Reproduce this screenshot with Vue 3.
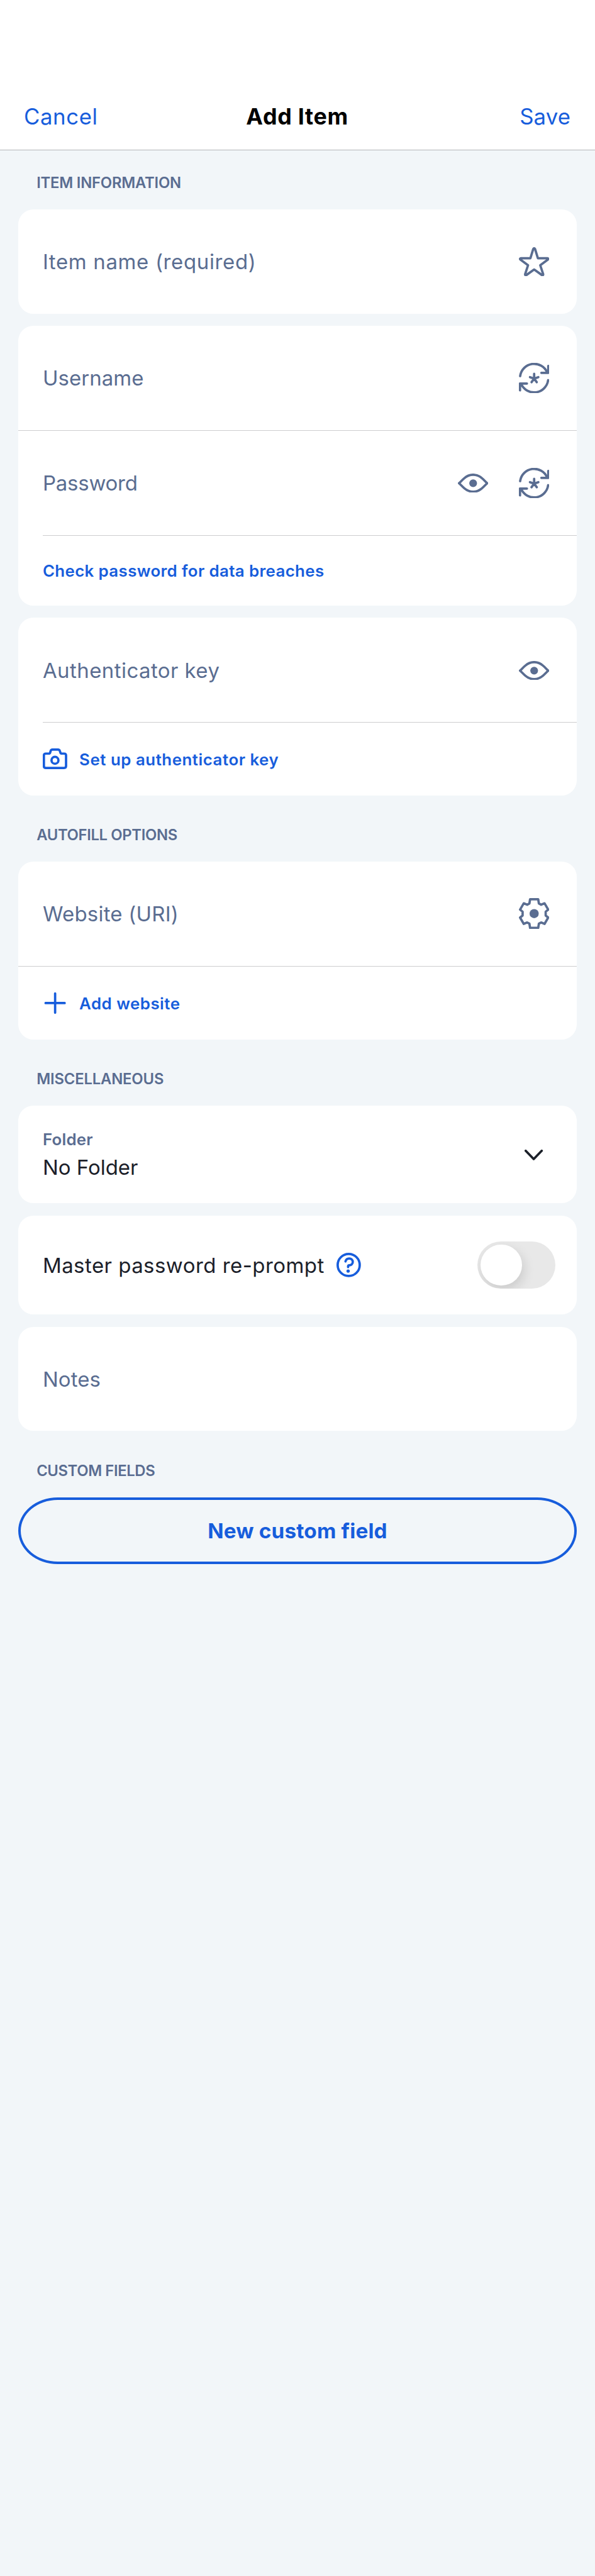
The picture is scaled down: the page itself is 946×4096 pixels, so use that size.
<script setup>
import { h, ref } from 'vue'

const reprompt = ref(false)

// Stroke icons: size of the drawing box and the shapes inside it.
const icons = {
  star: {
    w: 60, hgt: 57,
    shapes: [['path', { d: 'M28.2 3.6Q30 .9 31.8 3.6L37.3 21.7H56Q59 22.2 57 24.5L42 35.6 47.8 53.3Q47.9 56 45.3 54.9L30 44 14.7 54.9Q12.1 56 12.2 53.3L18 35.6 3 24.5Q1 22.2 4 21.7H22.7Z' }]]
  },
  generate: {
    w: 60, hgt: 60,
    shapes: [
      ['path', { d: 'M2.5 26A27.8 27.8 0 0 1 55.5 18.5M57.8 6V19.6H44.2' }],
      ['path', { d: 'M57.5 34A27.8 27.8 0 0 1 4.5 41.5M2.2 54V40.6H15.8' }],
      ['path', { d: 'M30 21.6V31M30 31L21.8 28M30 31L38.2 28M30 31L24.9 38M30 31L35.1 38' }]
    ]
  },
  eye: {
    w: 60, hgt: 38,
    shapes: [
      ['path', { d: 'M2.3 19C6 15.7 8 12.9 13 8.8C23 .1 37 .1 47 8.8C52 12.9 54 15.7 57.7 19C54 22.3 52 25.1 47 29.2C37 37.9 23 37.9 13 29.2C8 25.1 6 22.3 2.3 19Z' }],
      ['circle', { cx: 30, cy: 19, r: 7.6, class: 'solid' }]
    ]
  },
  gear: {
    w: 60, hgt: 61,
    shapes: [
      ['path', { d: 'M22 2.3H38L39.3 10.7 43.7 13 50.5 10.3 57.7 22.7 52.7 26.7V34.3L57.7 38.3 50.5 50.7 43.7 48 39.3 50.3 38 58.7H22L20.7 50.3 16.3 48 9.5 50.7 2.3 38.3 7.3 34.3V26.7L2.3 22.7 9.5 10.3 16.3 13 20.7 10.7Z' }],
      ['circle', { cx: 30, cy: 30.5, r: 9, class: 'solid' }]
    ]
  },
  camera: {
    w: 48, hgt: 41,
    shapes: [
      ['path', { d: 'M6 10.2H12Q14 10.2 14.6 8L15.4 5.2Q16.2 2.3 19 2.3H30Q32.8 2.3 33.6 5L34.6 8Q35.2 10.2 37.2 10.2H42Q45.8 10.2 45.8 14V34.6Q45.8 38.4 42 38.4H6Q2.2 38.4 2.2 34.6V14Q2.2 10.2 6 10.2Z' }],
      ['circle', { cx: 24, cy: 23.4, r: 6.8 }]
    ]
  },
  plus: {
    w: 48, hgt: 42,
    shapes: [['path', { d: 'M24.3 2.2V39.8M5.5 21H43.1' }]]
  },
  chevron: {
    w: 36, hgt: 21,
    shapes: [['path', { d: 'M2.2 2.2L18 18.5 33.8 2.2' }]]
  },
  help: {
    w: 48, hgt: 48,
    shapes: [
      ['circle', { cx: 24, cy: 24, r: 21.7 }],
      ['path', { d: 'M17.7 17C18.6 13.2 21.2 11.2 25 11.2C29 11.2 32 14 32 18C32 22 29 24.4 25 24.6Q22.8 24.7 22.8 27V28' }],
      ['circle', { cx: 22.9, cy: 36, r: 3.3, class: 'solid' }]
    ]
  }
}

const Icon = ({ name }) => {
  const { w, hgt, shapes } = icons[name]
  return h('svg', {
    viewBox: `0 0 ${w} ${hgt}`,
    style: { width: w / 100 + 'rem', height: hgt / 100 + 'rem' },
    fill: 'none', stroke: 'currentColor', 'stroke-width': 4.6,
    'stroke-linecap': 'round', 'stroke-linejoin': 'round', 'aria-hidden': 'true'
  }, shapes.map(([tag, attrs]) => attrs.class === 'solid'
    ? h(tag, { ...attrs, fill: 'currentColor', stroke: 'none' })
    : h(tag, attrs)))
}
Icon.props = ['name']

const track = (px) => ({ letterSpacing: px / 100 + 'rem' })
</script>

<template>
  <div class="screen">
    <header class="bar">
      <a class="action" :style="track(0.75)">Cancel</a>
      <h1 class="title" :style="track(0.9)">Add Item</h1>
      <a class="action end" :style="track(0.2)">Save</a>
    </header>

    <main class="content">
      <h2 class="section first" :style="track(-0.29)">ITEM INFORMATION</h2>
      <div class="card">
        <div class="row field">
          <span class="label" :style="track(0.8)">Item name (required)</span>
          <Icon name="star" />
        </div>
      </div>

      <div class="card">
        <div class="row field">
          <span class="label" :style="track(0.06)">Username</span>
          <Icon name="generate" />
        </div>
        <hr class="line" />
        <div class="row field">
          <span class="label" :style="track(-0.27)">Password</span>
          <div class="icons">
            <Icon name="eye" />
            <Icon name="generate" />
          </div>
        </div>
        <hr class="line inset" />
        <div class="row check">
          <a class="link" :style="track(0.46)">Check password for data breaches</a>
        </div>
      </div>

      <div class="card">
        <div class="row field">
          <span class="label" :style="track(0.54)">Authenticator key</span>
          <Icon name="eye" class="low" />
        </div>
        <hr class="line inset" />
        <div class="row extra">
          <Icon name="camera" />
          <a class="link" :style="track(0.64)">Set up authenticator key</a>
        </div>
      </div>

      <h2 class="section" :style="track(-0.44)">AUTOFILL OPTIONS</h2>
      <div class="card">
        <div class="row field">
          <span class="label" :style="track(0.28)">Website (URI)</span>
          <Icon name="gear" />
        </div>
        <hr class="line" />
        <div class="row extra add">
          <Icon name="plus" />
          <a class="link" :style="track(0.6)">Add website</a>
        </div>
      </div>

      <h2 class="section" :style="track(-0.22)">MISCELLANEOUS</h2>
      <div class="card">
        <div class="row folder">
          <div class="stack">
            <span class="caption" :style="track(0.29)">Folder</span>
            <span class="value">No Folder</span>
          </div>
          <Icon name="chevron" class="chevron" />
        </div>
      </div>

      <div class="card">
        <div class="row prompt">
          <span class="value" :style="track(0.57)">Master password re-prompt</span>
          <Icon name="help" class="help" />
          <button class="switch" role="switch" :aria-checked="reprompt" :class="{ on: reprompt }" @click="reprompt = !reprompt">
            <span class="thumb"></span>
          </button>
        </div>
      </div>

      <div class="card">
        <div class="row field">
          <span class="label" :style="track(0.1)">Notes</span>
        </div>
      </div>

      <h2 class="section" :style="track(-0.49)">CUSTOM FIELDS</h2>
      <button class="new-field" :style="track(0.2)">New custom field</button>
    </main>
  </div>
</template>

<style>
html {
  font-size: 80.855px;
}
body {
  background: #f2f6f9;
}
</style>

<style scoped>
.screen {
  box-sizing: border-box;
  width: 11.7rem;
  height: 4096px;
  background: #f2f6f9;
  color: #1b2029;
  font-family: Inter, "Liberation Sans", sans-serif;
  line-height: 1;
}
svg {
  display: block;
  flex: none;
}
.bar {
  box-sizing: border-box;
  height: 2.95rem;
  padding: 1.63rem 0.48rem 0 0.47rem;
  display: grid;
  grid-template-columns: 1fr auto 1fr;
  align-items: center;
  background: #fff;
  border-bottom: 1px solid #b3b5b7;
}
.action {
  padding-top: 0.01rem;
  font-size: 0.43rem;
  color: #175ddc;
}
.end {
  justify-self: end;
}
.title {
  margin: 0;
  padding-top: 0.04rem;
  font-size: 0.443rem;
  font-weight: 700;
  color: #000;
}
.content {
  padding: 0 0.36rem;
}
.section {
  margin: 0;
  padding: 0.595rem 0.36rem 0;
  height: 0.705rem;
  font-size: 0.295rem;
  line-height: 0.36rem;
  font-weight: 600;
  color: #5a6d91;
}
.section.first {
  padding-top: 0.465rem;
}
.card {
  background: #fff;
  border-radius: 0.3rem;
}
.card + .card {
  margin-top: 0.24rem;
}
.row {
  box-sizing: border-box;
  display: flex;
  align-items: center;
  padding: 0 0.54rem 0 0.48rem;
}
.field {
  height: 2.05rem;
  justify-content: space-between;
  color: #5a6d91;
}
.label,
.value {
  font-size: 0.408rem;
}
.label,
.link,
.prompt .value {
  padding-top: 0.02rem;
}
.icons {
  display: flex;
  align-items: center;
  gap: 0.6rem;
}
.low {
  margin-top: 0.02rem;
}
.line {
  height: 1px;
  margin: 0;
  border: 0;
  background: #cdcdcf;
}
.inset {
  margin-left: 0.48rem;
}
.check {
  height: 1.375rem;
}
.extra {
  height: 1.43rem;
  gap: 0.24rem;
}
.add {
  height: 1.44rem;
}
.link {
  font-size: 0.32rem;
  font-weight: 600;
}
.link,
.extra,
.help {
  color: #175ddc;
}
.folder {
  height: 1.92rem;
  justify-content: space-between;
}
.stack {
  display: flex;
  flex-direction: column;
  gap: 0.19rem;
}
.caption {
  font-size: 0.32rem;
  font-weight: 600;
  color: #5a6d91;
}
.chevron {
  margin: 0.02rem 0.12rem 0 0;
}
.prompt {
  height: 1.95rem;
  padding-right: 0.42rem;
}
.help {
  margin-left: 0.24rem;
}
.switch {
  display: block;
  width: 1.53rem;
  height: 0.93rem;
  margin: 0 0 0 auto;
  padding: 0.06rem;
  border: 0;
  border-radius: 0.465rem;
  overflow: hidden;
  background: #e8e8e8;
}
.switch.on {
  background: #175ddc;
}
.thumb {
  display: block;
  width: 0.81rem;
  height: 0.81rem;
  border-radius: 50%;
  background: #fff;
  box-shadow: 0.04rem 0.09rem 0.22rem rgba(0, 0, 0, 0.13);
}
.on .thumb {
  margin-left: auto;
}
.new-field {
  box-sizing: border-box;
  display: block;
  width: 100%;
  height: 1.32rem;
  padding: 0.01rem 0 0;
  border: 0.05rem solid #175ddc;
  border-radius: 0.78rem / 0.66rem;
  background: transparent;
  color: #175ddc;
  font-family: inherit;
  font-size: 0.412rem;
  font-weight: 700;
}
</style>
